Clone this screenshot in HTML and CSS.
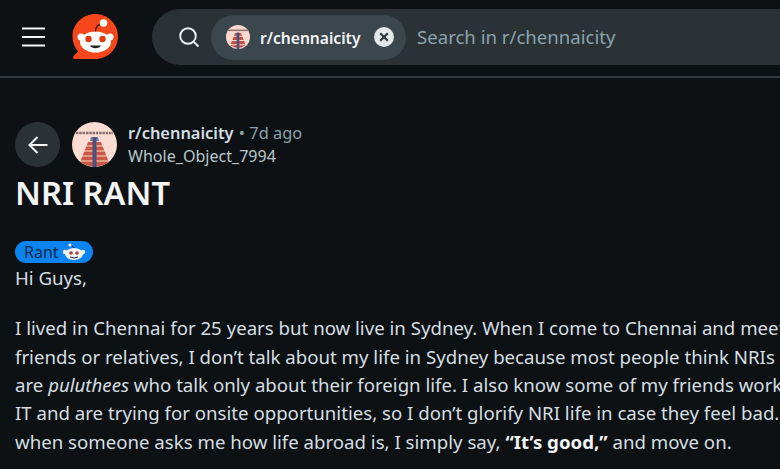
FILE: index.html
```html
<!DOCTYPE html>
<html lang="en">
<head>
    <meta charset="UTF-8">
    <title>NRI RANT : r/chennaicity</title>
    <link rel="stylesheet" href="styles.css">
</head>
<body>
    <header class="topbar">
        <svg class="menu" width="24" height="24" viewBox="0 0 24 24">
            <path d="M0 3.500h23M0 12h23M0 20.500h23" stroke="#f2f4f5" stroke-width="2.200" fill="none"/>
        </svg>
        <svg class="logo" width="48" height="48" viewBox="0 0 48 48">
            <path d="M24.500 1C36.500 1 47 10.500 47 23.500C47 36 36.500 46 24.500 46H4C2 46 1.500 44.500 2.500 43L7 38.500C3.500 34 1.500 29 1.500 23.500C1.500 10.500 12 1 24.500 1Z" fill="#f5461c"/>
            <circle cx="10" cy="24" r="3.500" fill="#fff"/>
            <circle cx="39" cy="24" r="3.500" fill="#fff"/>
            <ellipse cx="24.500" cy="29" rx="15.500" ry="10.500" fill="#fff"/>
            <circle cx="17.500" cy="26" r="3.200" fill="#e0390f"/>
            <circle cx="31.500" cy="26" r="3.200" fill="#e0390f"/>
            <path d="M19 32.500C20.500 36 28.500 36 30 32.500Z" fill="#222"/>
            <path d="M24.500 18.500C24.500 14 26 11.500 31 10.500" stroke="#4a1608" stroke-width="1.400" fill="none"/>
            <circle cx="32.500" cy="10" r="3.800" fill="#fff"/>
        </svg>
        <div class="search">
            <svg class="search-icon" width="22" height="22" viewBox="0 0 22 22">
                <circle cx="10" cy="10" r="7.800" stroke="#eef1f3" stroke-width="1.900" fill="none"/>
                <path d="M15.800 15.800L20.500 20.500" stroke="#eef1f3" stroke-width="1.900"/>
            </svg>
            <div class="chip">
                <svg class="temple" width="24" height="24" viewBox="0 0 45 45">
                    <circle cx="22.500" cy="22.500" r="22.500" fill="#fad9cf"/>
                    <path d="M4 10h37" stroke="#8f7470" stroke-width="3"/>
                    <path d="M17 15h11l2 5h-15zM14 22h17l2 6h-21zM11 30h23l2 6h-27zM8 38h29q-14 10 -29 0z" fill="#bf5347"/>
                    <path d="M22.500 14v31" stroke="#4a5080" stroke-width="5"/>
                </svg>
                <span class="chip-name">r/chennaicity</span>
                <svg class="chip-close" width="20" height="20" viewBox="0 0 20 20">
                    <circle cx="10" cy="10" r="10" fill="#e4e9ec"/>
                    <path d="M6.200 6.200L13.800 13.800M13.800 6.200L6.200 13.800" stroke="#2f383d" stroke-width="2.200"/>
                </svg>
            </div>
            <span class="placeholder">Search in r/chennaicity</span>
        </div>
    </header>

    <main class="post">
        <div class="post-head">
            <div class="back">
                <svg width="22" height="22" viewBox="0 0 22 22">
                    <path d="M20.500 11H2.500M10.500 3L2.500 11L10.500 19" stroke="#f2f4f5" stroke-width="2" fill="none"/>
                </svg>
            </div>
            <svg class="avatar" width="45" height="45" viewBox="0 0 45 45">
                <circle cx="22.500" cy="22.500" r="22.500" fill="#fbdcd2"/>
                <path d="M4 11h37" stroke="#85706f" stroke-width="2.500" stroke-dasharray="2.500 .8"/>
                <path d="M19 15h7l1 4h-9z" fill="#7c7fa6"/>
                <path d="M16 20h13l1 3h-15zM14 25h17l1 3h-19zM12 30h21l1 3h-23zM10 35h25l1 3h-27zM8 40h29q-14 9 -29 0z" fill="#c9584a"/>
                <path d="M15 23h15l1 2h-17zM13 28h19l1 2h-21zM11 33h23l1 2h-25zM9 38h27l1 2h-29z" fill="#e39a7d"/>
                <path d="M22.500 15v30" stroke="#4a5080" stroke-width="4"/>
            </svg>
            <div class="meta">
                <div><b class="sub">r/chennaicity</b> <span class="age">• 7d ago</span></div>
                <div class="author">Whole_Object_7994</div>
            </div>
        </div>

        <h1 class="title">NRI RANT</h1>

        <div class="flair">Rant
            <svg width="24" height="18" viewBox="0 0 24 18">
                <ellipse cx="12" cy="11" rx="9" ry="6" fill="#f2f4f5"/>
                <circle cx="3" cy="9" r="2.200" fill="#f2f4f5"/>
                <circle cx="21" cy="9" r="2.200" fill="#f2f4f5"/>
                <circle cx="9" cy="10" r="1.800" fill="#b0413a"/>
                <circle cx="15" cy="10" r="1.800" fill="#b0413a"/>
                <path d="M12 5L9 2" stroke="#223" stroke-width="1"/>
                <circle cx="8" cy="2" r="1.600" fill="#f2f4f5"/>
                <path d="M8 14q4 2 8 0" stroke="#223" stroke-width="1" fill="none"/>
            </svg>
        </div>

        <p class="body-text">Hi Guys,</p>
        <p class="body-text">I lived in Chennai for 25 years but now live in Sydney. When I come to Chennai and meet<br>
        friends or relatives, I don’t talk about my life in Sydney because most people think NRIs<br>
        are <em>puluthees</em> who talk only about their foreign life. I also know some of my friends work<br>
        IT and are trying for onsite opportunities, so I don’t glorify NRI life in case they feel bad.<br>
        when someone asks me how life abroad is, I simply say, <strong>“It’s good,”</strong> and move on.</p>
    </main>
</body>
</html>
```

FILE: styles.css
```css
*{
    margin: 0;
    padding: 0;
    box-sizing: border-box;
}

html, body{
    height: 100%;
    overflow: hidden;
}

body{
    background: #0e1113;
    color: #d5dfe3;
    font-family: 'Noto Sans', sans-serif;
}

svg{
    display: block;
    flex: none;
}

.topbar{
    display: flex;
    align-items: center;
    height: 78px;
    padding: 0 0 2px 22px;
    border-bottom: 2px solid #33393d;
}

.logo{
    margin-left: 25px;
}

.search{
    display: flex;
    align-items: center;
    flex: none;
    width: 700px;
    height: 56px;
    margin-left: 33px;
    padding-left: 26px;
    background: #2a3236;
    border-radius: 28px;
}

.chip{
    display: flex;
    align-items: center;
    width: 195px;
    height: 45px;
    margin-left: 11px;
    padding-left: 15px;
    background: #3c474d;
    border-radius: 23px;
}

.chip-name{
    margin: 1px 0 0 10px;
    color: #f2f4f5;
    font-size: 15.600px;
    font-weight: 600;
    white-space: nowrap;
}

.chip-close{
    margin-left: 14px;
}

.placeholder{
    margin: 0 0 2px 11px;
    color: #8ba2ad;
    font-size: 18.600px;
    white-space: nowrap;
}

.post{
    padding: 44px 0 0 15px;
    white-space: nowrap;
}

.post-head{
    display: flex;
    align-items: center;
}

.back{
    display: flex;
    align-items: center;
    justify-content: center;
    width: 45px;
    height: 45px;
    background: #2a3236;
    border-radius: 50%;
}

.avatar{
    margin-left: 12px;
}

.meta{
    margin-left: 11px;
    font-size: 16.400px;
    line-height: 22.500px;
}

.sub{
    color: #d5dfe3;
    font-weight: 600;
}

.age{
    margin-left: 1px;
    color: #8ba2ad;
}

.author{
    color: #b8c5cb;
    font-size: 16.070px;
}

.title{
    margin-top: 5px;
    color: #f2f4f5;
    font-size: 32.700px;
    font-weight: 600;
    line-height: 42px;
}

.flair{
    display: flex;
    align-items: center;
    gap: 3px;
    width: 78px;
    height: 22px;
    margin-top: 27px;
    padding-left: 9px;
    background: #0a84f0;
    border-radius: 11px;
    color: #0b2a4a;
    font-size: 16px;
}

.body-text{
    margin-top: 1px;
    margin-bottom: 22.200px;
    font-size: 18.650px;
    line-height: 28.300px;
}

.body-text em{
    font-style: italic;
}

.body-text strong{
    color: #f2f4f5;
    font-weight: 700;
}
```
